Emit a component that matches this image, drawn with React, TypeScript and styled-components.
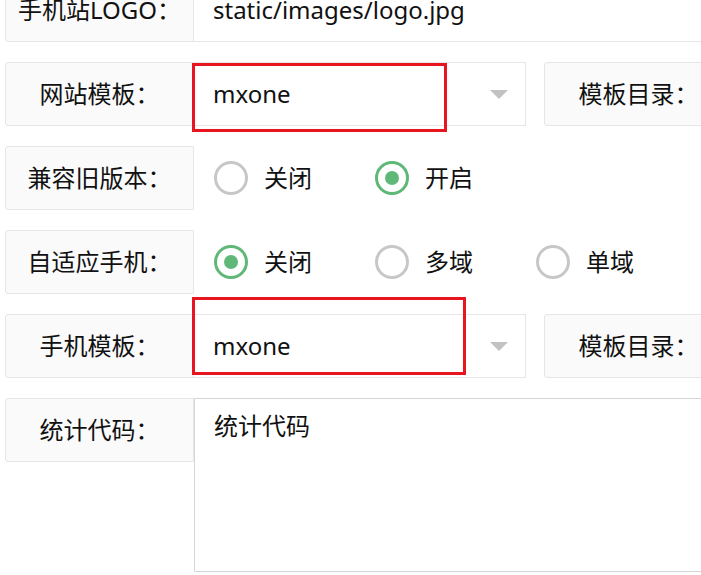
import React from "react";
import styled, { createGlobalStyle } from "styled-components";

const GlobalStyle = createGlobalStyle`
  html, body {
    margin: 0;
    padding: 0;
    background: #fff;
    overflow: hidden;
  }
  body {
    font-family: "Noto Sans", "Noto Sans CJK SC", sans-serif;
    color: #111;
  }
`;

const Form = styled.form`
  width: 800px;
  margin-top: -22px;
  padding-left: 5px;
`;

const Item = styled.div<{ $tall?: boolean }>`
  display: flex;
  align-items: flex-start;
  margin-bottom: 20px;
  height: ${(p) => (p.$tall ? "174px" : "64px")};
`;

const Label = styled.label`
  box-sizing: border-box;
  width: 189px;
  height: 64px;
  flex-shrink: 0;
  display: flex;
  align-items: center;
  justify-content: center;
  background: #fafafa;
  border: 1px solid #e6e6e6;
  border-radius: 3px 0 0 3px;
  font-size: 24px;
  line-height: 1;
  white-space: nowrap;
`;

const SideLabel = styled(Label)`
  margin-left: 18px;
`;

const Input = styled.div`
  box-sizing: border-box;
  flex: 1;
  height: 64px;
  display: flex;
  align-items: center;
  padding-left: 19px;
  border: 1px solid #e6e6e6;
  border-left: none;
  font-size: 24px;
  line-height: 1;
`;

const Select = styled.div`
  box-sizing: border-box;
  position: relative;
  width: 332px;
  height: 64px;
  display: flex;
  align-items: center;
  padding-left: 19px;
  border: 1px solid #e6e6e6;
  border-left: none;
  font-size: 24px;
  line-height: 1;
`;

const Arrow = styled.span`
  position: absolute;
  right: 17px;
  top: 27px;
  width: 0;
  height: 0;
  border-left: 9px solid transparent;
  border-right: 9px solid transparent;
  border-top: 9px solid #c2c2c2;
`;

const Mark = styled.span<{ $top: number; $w: number; $h: number }>`
  position: absolute;
  left: -2px;
  top: ${(p) => p.$top}px;
  width: ${(p) => p.$w}px;
  height: ${(p) => p.$h}px;
  box-sizing: border-box;
  border: 3px solid #e8141f;
  pointer-events: none;
`;

const RadioGroup = styled.div`
  display: flex;
  align-items: center;
  height: 64px;
  padding-left: 20px;
`;

const Radio = styled.div`
  display: flex;
  align-items: center;
  width: 161px;
  font-size: 24px;
  line-height: 1;
`;

const Circle = styled.span<{ $on?: boolean }>`
  box-sizing: border-box;
  width: 34px;
  height: 34px;
  margin-right: 16px;
  border-radius: 50%;
  border: 3px solid ${(p) => (p.$on ? "#5fb878" : "#c7c7c7")};
  display: flex;
  align-items: center;
  justify-content: center;

  &::after {
    content: "";
    display: ${(p) => (p.$on ? "block" : "none")};
    width: 14px;
    height: 14px;
    border-radius: 50%;
    background: #5fb878;
  }
`;

const Textarea = styled.div`
  box-sizing: border-box;
  flex: 1;
  height: 174px;
  padding: 12px 19px;
  border: 1px solid #d6d6d6;
  border-radius: 0 3px 3px 0;
  font-size: 24px;
  line-height: 1.25;
`;

type RadioOption = { text: string; on?: boolean };

const Radios = ({ options }: { options: RadioOption[] }) => (
  <RadioGroup>
    {options.map((o) => (
      <Radio key={o.text}>
        <Circle $on={o.on} />
        {o.text}
      </Radio>
    ))}
  </RadioGroup>
);

const App = () => {
  return (
    <>
      <GlobalStyle />
      <Form>
        <Item>
          <Label>手机站LOGO：</Label>
          <Input>static/images/logo.jpg</Input>
        </Item>
        <Item>
          <Label>网站模板：</Label>
          <Select>
            mxone
            <Arrow />
            <Mark $top={0} $w={255} $h={69} />
          </Select>
          <SideLabel>模板目录：</SideLabel>
        </Item>
        <Item>
          <Label>兼容旧版本：</Label>
          <Radios options={[{ text: "关闭" }, { text: "开启", on: true }]} />
        </Item>
        <Item>
          <Label>自适应手机：</Label>
          <Radios
            options={[{ text: "关闭", on: true }, { text: "多域" }, { text: "单域" }]}
          />
        </Item>
        <Item>
          <Label>手机模板：</Label>
          <Select>
            mxone
            <Arrow />
            <Mark $top={-18} $w={274} $h={78} />
          </Select>
          <SideLabel>模板目录：</SideLabel>
        </Item>
        <Item $tall>
          <Label>统计代码：</Label>
          <Textarea>统计代码</Textarea>
        </Item>
      </Form>
    </>
  );
};

export default App;
